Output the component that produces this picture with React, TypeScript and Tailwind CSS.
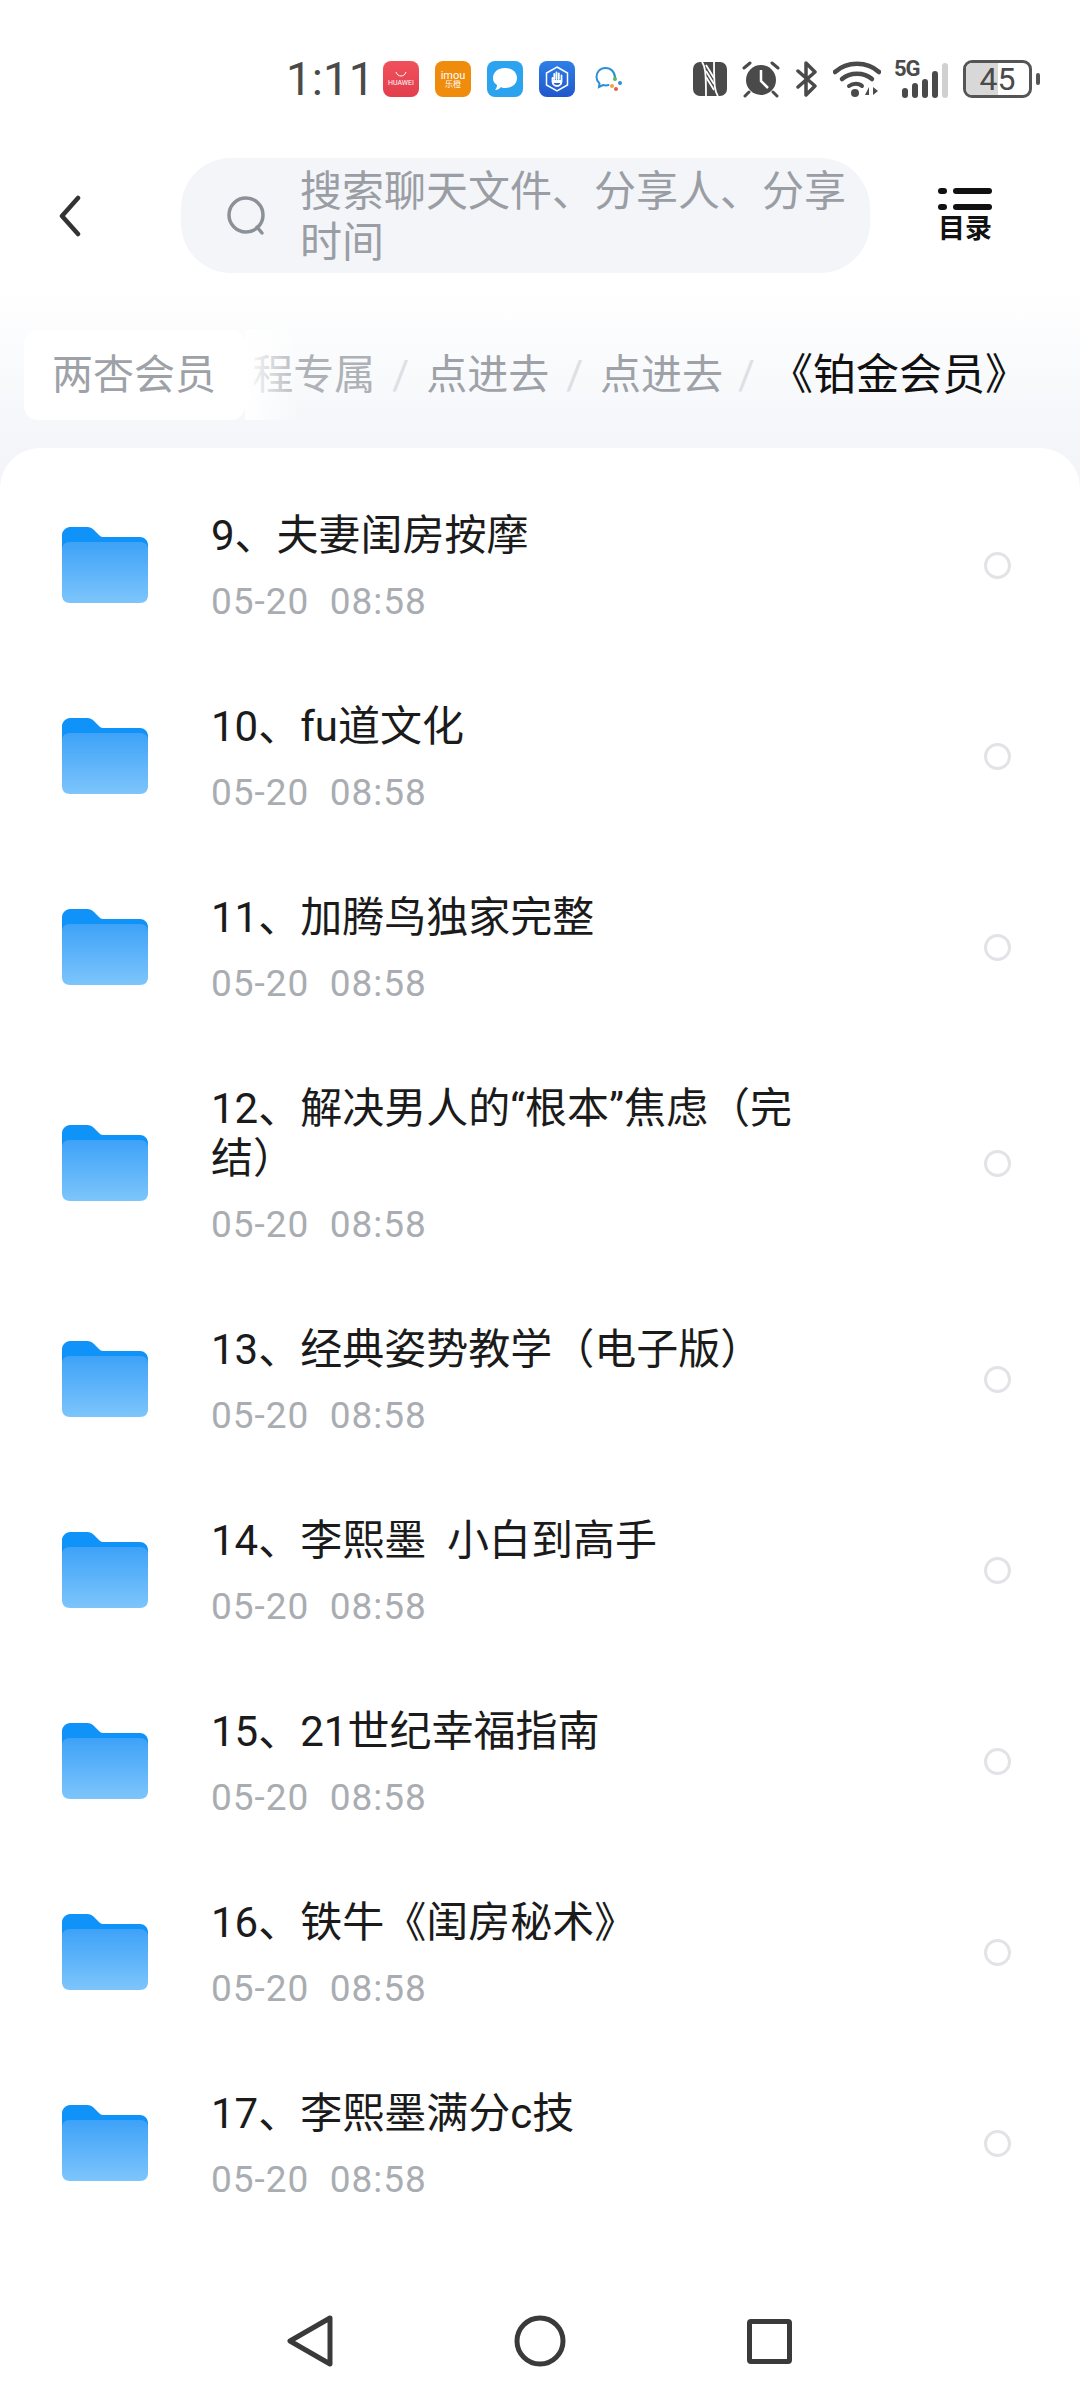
const font = "font-['Roboto','Noto_Sans_CJK_SC',sans-serif]";

const folders = [
  { title: "9、夫妻闺房按摩" },
  { title: "10、fu道文化" },
  { title: "11、加腾鸟独家完整" },
  { title: "12、解决男人的“根本”焦虑（完结）" },
  { title: "13、经典姿势教学（电子版）" },
  { title: "14、李熙墨  小白到高手" },
  { title: "15、21世纪幸福指南" },
  { title: "16、铁牛《闺房秘术》" },
  { title: "17、李熙墨满分c技" },
];

function StatusBar() {
  return (
    <div className="flex h-[158px] items-center pl-[286px]">
      <span className="w-[97px] text-[46px] leading-none text-[#4a4a4a]">1:11</span>
      <div className="flex h-[36px] w-[36px] flex-col items-center justify-center rounded-[8px] bg-gradient-to-b from-[#f0505c] to-[#e23e4c]">
        <svg width="14" height="6" viewBox="0 0 14 6" fill="none">
          <path d="M2 1c1 3 3 4 5 4s4-1 5-4" stroke="#fff" strokeWidth="1" />
        </svg>
        <span className="mt-[3px] text-[7px] leading-none text-white">HUAWEI</span>
      </div>
      <div className="ml-[16px] flex h-[36px] w-[36px] flex-col items-center justify-center rounded-[8px] bg-[#f08c0c]">
        <span className="text-[11px] leading-none text-white">imou</span>
        <span className="text-[8px] leading-none text-white">乐橙</span>
      </div>
      <div className="ml-[16px] flex h-[36px] w-[36px] items-center justify-center rounded-[8px] bg-[#2ba3ee]">
        <svg width="28" height="26" viewBox="0 0 28 26" fill="#fff">
          <path d="M14 2c7 0 12 4 12 10s-5 10-12 10c-1 0-3 0-4-1-1 1-3 3-6 3 1-1 2-3 2-5-3-2-4-4-4-7C2 6 7 2 14 2z" />
        </svg>
      </div>
      <div className="ml-[16px] flex h-[36px] w-[36px] items-center justify-center rounded-[8px] bg-gradient-to-b from-[#2f7fe8] to-[#2058cc]">
        <svg width="28" height="28" viewBox="0 0 28 28" fill="none">
          <path d="M14 2l10.500 6v12L14 26 3.500 20V8z" stroke="#fff" strokeWidth="1.500" />
          <path d="M9.500 13v3.500c0 2.500 2 4.500 4.500 4.500s4.500-2 4.500-4.500V10.500M11.300 14V9M13.500 14V7.500M15.800 14V8.500" stroke="#fff" strokeWidth="1.800" strokeLinecap="round" />
          <path d="M10 15h8v3h-8z" fill="#fff" />
        </svg>
      </div>
      <svg className="ml-[20px]" width="28" height="26" viewBox="0 0 28 26" fill="none">
        <path d="M20 12C20 6 16 2 10.500 2S1.500 6 1.500 11c0 3 1.500 5 3 6.500L4 21l4-2c2 .5 4 .5 5.500 0" stroke="#2b8fd6" strokeWidth="2" strokeLinecap="round" />
        <circle cx="20" cy="13" r="2" fill="#5cb85c" />
        <circle cx="25" cy="17" r="2" fill="#2b8fd6" />
        <circle cx="17" cy="20" r="2" fill="#f2a33a" />
        <circle cx="21" cy="23" r="2" fill="#e0604c" />
      </svg>

      <svg className="ml-[70px]" width="34" height="34" viewBox="0 0 34 34" fill="none">
        <rect width="34" height="34" rx="7" fill="#4a4a4a" />
        <path d="M9 0c3 4 4 9 4 34M25 34c-3-4-4-9-4-34" stroke="#fff" strokeWidth="1.800" />
        <path d="M13 9l8 13M13 15l8 13M13 3l8 13" stroke="#fff" strokeWidth="1.800" />
      </svg>
      <svg className="ml-[14px]" width="40" height="38" viewBox="0 0 40 38" fill="none">
        <circle cx="20" cy="20" r="15" fill="#4a4a4a" />
        <path d="M20 10v11l7 7" stroke="#fff" strokeWidth="2.500" />
        <path d="M3 8l6-5M37 8l-6-5M8 32l-4 4M32 32l4 4" stroke="#4a4a4a" strokeWidth="3" strokeLinecap="round" />
      </svg>
      <svg className="ml-[15px]" width="22" height="36" viewBox="0 0 22 36" fill="none">
        <path d="M2 10l17 15-9 9V2l9 9L2 26" stroke="#4a4a4a" strokeWidth="3.500" strokeLinecap="round" strokeLinejoin="round" />
      </svg>
      <svg className="ml-[15px]" width="48" height="36" viewBox="0 0 48 36" fill="none">
        <path d="M2 11c12-11 32-11 44 0" stroke="#4a4a4a" strokeWidth="4.500" strokeLinecap="round" />
        <path d="M9 18c8-7 22-7 30 0" stroke="#4a4a4a" strokeWidth="4.500" strokeLinecap="round" />
        <path d="M16 25c4-3 10-3 13 0" stroke="#4a4a4a" strokeWidth="4" strokeLinecap="round" />
        <circle cx="22" cy="32" r="4" fill="#4a4a4a" />
        <path d="M32 34l4-8v8zM40 26l5 4-5 4z" fill="#4a4a4a" />
      </svg>
      <div className="relative ml-[13px] h-[38px] w-[54px]">
        <span className="absolute left-0 top-[-2px] text-[22px] font-bold leading-[22px] tracking-[-1px] text-[#4a4a4a]">5G</span>
        <div className="absolute bottom-0 right-0 flex items-end gap-[4px]">
          <div className="h-[10px] w-[6px] rounded-full bg-[#4a4a4a]" />
          <div className="h-[15px] w-[6px] rounded-full bg-[#4a4a4a]" />
          <div className="h-[19px] w-[6px] rounded-full bg-[#4a4a4a]" />
          <div className="h-[27px] w-[6px] rounded-full bg-[#4a4a4a]" />
          <div className="h-[35px] w-[6px] rounded-full bg-[#d0d0d0]" />
        </div>
      </div>
      <div className="relative ml-[15px] flex h-[38px] w-[69px] items-center justify-center overflow-hidden rounded-[9px] border-[3px] border-[#555]">
        <div className="absolute bottom-0 left-0 top-0 w-[50%] bg-[#d8d8d8]" />
        <span className="relative text-[32px] leading-none text-[#4a4a4a]">45</span>
      </div>
      <div className="ml-[4px] h-[12px] w-[4px] rounded-full bg-[#555]" />
    </div>
  );
}

function Header() {
  return (
    <div className="flex h-[115px] items-center">
      <svg className="ml-[58px]" width="24" height="42" viewBox="0 0 24 42" fill="none">
        <path d="M20 3L4 21l16 18" stroke="#333" strokeWidth="4.500" strokeLinecap="round" strokeLinejoin="round" />
      </svg>
      <div className="ml-[99px] flex h-[115px] w-[689px] items-center rounded-[50px] bg-[#f3f5f9] pl-[45px]">
        <svg className="shrink-0" width="42" height="42" viewBox="0 0 42 42" fill="none">
          <circle cx="20" cy="20" r="17" stroke="#8c9197" strokeWidth="3.500" />
          <path d="M31 32l5 6" stroke="#8c9197" strokeWidth="3.500" strokeLinecap="round" />
        </svg>
        <span className="ml-[32px] w-[560px] pt-[3px] text-[42px] leading-[51px] text-[#9a9ea4]">
          搜索聊天文件、分享人、分享时间
        </span>
      </div>
      <div className="ml-[68px] flex w-[54px] flex-col items-center">
        <div className="flex w-[54px] items-center gap-[6px]">
          <div className="h-[6px] w-[9px] rounded-full bg-[#111]" />
          <div className="h-[6px] w-[39px] rounded-full bg-[#111]" />
        </div>
        <div className="mt-[10px] flex w-[54px] items-center gap-[6px]">
          <div className="h-[6px] w-[9px] rounded-full bg-[#111]" />
          <div className="h-[6px] w-[39px] rounded-full bg-[#111]" />
        </div>
        <span className="mt-[6px] whitespace-nowrap text-[27px] font-bold leading-[27px] text-[#111]">目录</span>
      </div>
    </div>
  );
}

function Breadcrumb() {
  return (
    <div className="mt-[57px] flex h-[90px] items-center whitespace-nowrap pl-[24px] pr-[52px] text-[41px] leading-none text-[#9ea2a8]">
      <div className="flex h-[90px] w-[221px] shrink-0 items-center rounded-[14px] bg-white pl-[28px]">
        两杏会员
      </div>
      <div className="relative flex h-[90px] flex-1 items-center justify-end overflow-hidden">
        <span className="text-[#aeb2b7]">程专属</span>
        <span className="mx-[17px] text-[#dde0e4]">/</span>
        <span>点进去</span>
        <span className="mx-[17px] text-[#dde0e4]">/</span>
        <span>点进去</span>
        <span className="mx-[15px] text-[#dde0e4]">/</span>
        <span className="text-[43px] text-[#111]">《铂金会员》</span>
        <div className="absolute bottom-0 left-0 top-0 w-[56px] bg-gradient-to-r from-white to-white/0" />
      </div>
    </div>
  );
}

function FolderIcon() {
  return (
    <svg className="-mt-[2px] shrink-0" width="86" height="76" viewBox="0 0 86 76">
      <defs>
        <linearGradient id="folderFront" x1="0" y1="0" x2="0" y2="1">
          <stop offset="0" stopColor="#3ea2f8" />
          <stop offset="1" stopColor="#7dc5fb" />
        </linearGradient>
      </defs>
      <path d="M8 0h17c3 0 5 1 7 3l5 5c2 2 3 2 6 2h35c4 0 8 3 8 8v20H0V8c0-4 4-8 8-8z" fill="#0f93f8" />
      <path d="M0 22c0-4 3-7 8-7h70c5 0 8 3 8 7v46c0 5-3 8-8 8H8c-5 0-8-3-8-8z" fill="url(#folderFront)" />
    </svg>
  );
}

function FolderRow({ title }: { title: string }) {
  return (
    <div className="flex items-center py-[40.5px] pl-[62px] pr-[69px]">
      <FolderIcon />
      <div className="ml-[63px] w-[600px]">
        <div className="whitespace-pre-wrap text-[42px] leading-[50px] text-[#1b1b1b]">{title}</div>
        <div className="mt-[20px] mb-[-2px] whitespace-pre text-[37px] leading-[42px] tracking-[1px] text-[#a9adb2]">05-20  08:58</div>
      </div>
      <div className="ml-auto h-[27px] w-[27px] rounded-full border-[3px] border-[#e1e3e6]" />
    </div>
  );
}

function NavBar() {
  return (
    <div className="mt-auto flex h-[118px] items-center pl-[286px]">
      <svg width="48" height="54" viewBox="0 0 48 54" fill="none">
        <path d="M44 4L4 27l40 23z" stroke="#3a3a3a" strokeWidth="5" strokeLinejoin="round" />
      </svg>
      <svg className="ml-[179px]" width="54" height="54" viewBox="0 0 54 54" fill="none">
        <circle cx="27" cy="27" r="23" stroke="#3a3a3a" strokeWidth="5" />
      </svg>
      <div className="ml-[180px] h-[45px] w-[45px] rounded-[4px] border-[5px] border-[#3a3a3a]" />
    </div>
  );
}

export default function App() {
  return (
    <div className={`flex h-[2400px] w-[1080px] flex-col overflow-hidden bg-gradient-to-b from-white from-[12%] to-[#f3f5f9] to-[19%] ${font}`} lang="zh-CN">
      <StatusBar />
      <Header />
      <Breadcrumb />
      <div className="mt-[28px] flex flex-1 flex-col rounded-t-[40px] bg-white pt-[22px]">
        {folders.map((f) => (
          <FolderRow key={f.title} title={f.title} />
        ))}
        <NavBar />
      </div>
    </div>
  );
}
